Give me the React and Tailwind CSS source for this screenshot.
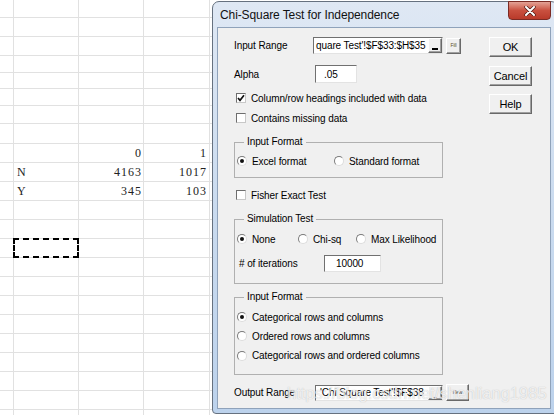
import React from 'react';

const ui = { fontFamily: '"Liberation Sans", Arial, sans-serif' };
const sheetFont = { fontFamily: '"Liberation Serif", "Times New Roman", serif' };

// row heights of the sheet behind the dialog
const rows = [
  'h-[18px]', 'h-[19px]', 'h-[19px]', 'h-[17px]', 'h-[16px]', 'h-[17px]', 'h-[18px]', 'h-[20px]',
  'h-[19px]', 'h-[19px]', 'h-[19px]', 'h-[19px]', 'h-[19px]', 'h-[19px]', 'h-[19px]', 'h-[19px]',
  'h-[19px]', 'h-[19px]', 'h-[19px]', 'h-[19px]', 'h-[19px]', 'h-[19px]', 'h-[19px]',
];

const cells = {
  8: ['', '', '0', '1'],
  9: ['', 'N', '4163', '1017'],
  10: ['', 'Y', '345', '103'],
};

function Sheet() {
  return (
    <div className="flex flex-col" style={sheetFont}>
      {rows.map((h, i) => {
        const c = cells[i] || ['', '', '', ''];
        return (
          <div key={i} className={`${h} flex border-b border-[#e1e1e1] text-[12px] tracking-[1px] text-[#222]`}>
            <div className="w-[14px] border-r border-[#e1e1e1]" />
            <div className="w-[65px] border-r border-[#e1e1e1] pl-[3px] flex items-center relative">
              {c[1]}
              {i === 13 && (
                <div className="absolute -left-[1px] -top-[1px] w-[66px] h-[20px] border-2 border-dashed border-black" />
              )}
            </div>
            <div className="w-[65px] border-r border-[#e1e1e1] pr-[1px] flex items-center justify-end">{c[2]}</div>
            <div className="w-[66px] border-r border-[#e1e1e1] pr-[2px] flex items-center justify-end">{c[3]}</div>
            <div className="flex-1" />
          </div>
        );
      })}
    </div>
  );
}

function Check({ checked, label }) {
  return (
    <div className="h-[12px] flex items-center gap-[5px]">
      <div className="w-[10px] h-[10px] ml-[2px] bg-white border border-t-[#6e6e6e] border-l-[#6e6e6e] border-r-[#c8c8c8] border-b-[#c8c8c8] flex items-center justify-center">
        {checked && (
          <svg width="8" height="8" viewBox="0 0 8 8">
            <polyline points="1,4 3,6.3 7,1.3" fill="none" stroke="#111" strokeWidth="1.7" />
          </svg>
        )}
      </div>
      <span className="whitespace-nowrap">{label}</span>
    </div>
  );
}

function Radio({ on, label, className = '' }) {
  return (
    <div className={`flex items-center gap-[5px] ${className}`}>
      <div className="w-[10px] h-[10px] shrink-0 rounded-full bg-white border border-t-[#7a7a7a] border-l-[#7a7a7a] border-r-[#dcdcdc] border-b-[#dcdcdc] flex items-center justify-center">
        {on && <div className="w-[4px] h-[4px] rounded-full bg-[#111]" />}
      </div>
      <span className="whitespace-nowrap">{label}</span>
    </div>
  );
}

function Group({ title, className, children }) {
  return (
    <div className={`relative w-[209px] border border-[#b0b0b0] ${className}`}>
      <div className="absolute -top-[8px] left-[9px] px-[3px] bg-[#f0f0f0] leading-[14px]">{title}</div>
      {children}
    </div>
  );
}

function Btn({ children, className = '' }) {
  return (
    <div className={`flex items-center justify-center bg-[#f0f0f0] border border-t-white border-l-white border-r-[#696969] border-b-[#696969] shadow-[inset_-1px_-1px_0_#a0a0a0] ${className}`}>
      {children}
    </div>
  );
}

function Field({ className = '', children }) {
  return (
    <div className={`bg-white border border-t-[#707070] border-l-[#707070] border-r-[#e3e3e3] border-b-[#e3e3e3] flex items-center overflow-hidden whitespace-nowrap ${className}`}>
      {children}
    </div>
  );
}

function Dialog() {
  return (
    <div
      className="absolute left-[212px] top-[1px] w-[346px] h-[413px] rounded-t-[7px] rounded-b-[4px] border border-[#66717f] bg-gradient-to-b from-[#dfe8f4] via-[#cadbef] to-[#bcd2ec] text-[10px] tracking-[-0.1px] text-black"
      style={ui}
    >
      <div className="h-[25px] pl-[7px] pt-[1px] flex items-center text-[12px] tracking-[-0.1px] text-[#111]">
        Chi-Square Test for Independence
      </div>
      <div className="absolute right-[6px] -top-[1px] w-[43px] h-[19px] rounded-b-[4px] border border-[#7b2b24] bg-gradient-to-b from-[#e3a295] via-[#c9503f] to-[#b93a2a] flex items-center justify-center">
        <svg width="12" height="10" viewBox="0 0 12 10">
          <path d="M2 1 L10 9 M10 1 L2 9" stroke="#4a1a14" strokeWidth="3.4" strokeLinecap="round" />
          <path d="M2 1 L10 9 M10 1 L2 9" stroke="#fff" strokeWidth="2" strokeLinecap="round" />
        </svg>
      </div>

      <div className="ml-[4px] w-[334px] h-[382px] border border-[#8fa2ba] bg-[#f0f0f0] pl-[16px] pt-[9px] flex">
        <div className="w-[255px] flex flex-col">
          <div className="h-[17px] flex items-center">
            <span className="w-[79px]">Input Range</span>
            <Field className="w-[130px] h-[17px] pl-[2px] justify-between">
              <span>quare Test'!$F$33:$H$35</span>
              <Btn className="w-[14px] h-[15px] shrink-0 items-end pb-[2px]">
                <div className="w-[6px] h-[2px] bg-black" />
              </Btn>
            </Field>
            <Btn className="ml-[3px] w-[15px] h-[16px] text-[5px] text-[#5a4a2a]">Fill</Btn>
          </div>

          <div className="mt-[11px] h-[18px] flex items-center">
            <span className="w-[81px]">Alpha</span>
            <Field className="w-[42px] h-[18px] pl-[8px]">.05</Field>
          </div>

          <div className="mt-[9px]">
            <Check checked label="Column/row headings included with data" />
          </div>
          <div className="mt-[8px]">
            <Check label="Contains missing data" />
          </div>

          <Group title="Input Format" className="mt-[18px] h-[36px]">
            <div className="flex items-center h-[12px] mt-[12px] pl-[2px]">
              <Radio on label="Excel format" className="w-[97px]" />
              <Radio label="Standard format" />
            </div>
          </Group>

          <div className="mt-[11px]">
            <Check label="Fisher Exact Test" />
          </div>

          <Group title="Simulation Test" className="mt-[18px] h-[65px]">
            <div className="flex items-center h-[12px] mt-[13px] pl-[2px]">
              <Radio on label="None" className="w-[61px]" />
              <Radio label="Chi-sq" className="w-[58px]" />
              <Radio label="Max Likelihood" />
            </div>
            <div className="flex items-center mt-[10px] pl-[4px]">
              <span className="w-[85px]"># of iterations</span>
              <Field className="w-[57px] h-[17px] pl-[11px]">10000</Field>
            </div>
          </Group>

          <Group title="Input Format" className="mt-[13px] h-[78px]">
            <div className="flex flex-col pl-[2px] pt-[13px] gap-[7px]">
              <Radio on label="Categorical rows and columns" className="h-[12px]" />
              <Radio label="Ordered rows and columns" className="h-[12px]" />
              <Radio label="Categorical rows and ordered columns" className="h-[13px]" />
            </div>
          </Group>

          <div className="mt-[9px] h-[17px] flex items-center">
            <span className="w-[81px]">Output Range</span>
            <Field className="w-[128px] h-[16px] pl-[4px] justify-between">
              <span>'Chi Square Test'!$F$38</span>
              <Btn className="w-[14px] h-[14px] shrink-0 items-end text-[7px] leading-[7px]">..</Btn>
            </Field>
            <Btn className="ml-[3px] w-[23px] h-[17px] text-[5px] text-[#333]">New</Btn>
          </div>
        </div>

        <div className="w-[43px] flex flex-col text-[11px]">
          <Btn className="h-[20px]">OK</Btn>
          <Btn className="mt-[9px] h-[20px]">Cancel</Btn>
          <Btn className="mt-[8px] h-[20px]">Help</Btn>
        </div>
      </div>
    </div>
  );
}

export default function App() {
  return (
    <div className="relative w-[554px] h-[415px] overflow-hidden bg-white">
      <Sheet />
      <Dialog />
      <div
        className="absolute left-[287px] top-[381px] text-[16.5px] text-white/75 [text-shadow:0_0_1px_rgba(110,110,110,0.45)]"
        style={ui}
      >
        https://blog.csdn.net/shenliang1985
      </div>
    </div>
  );
}
